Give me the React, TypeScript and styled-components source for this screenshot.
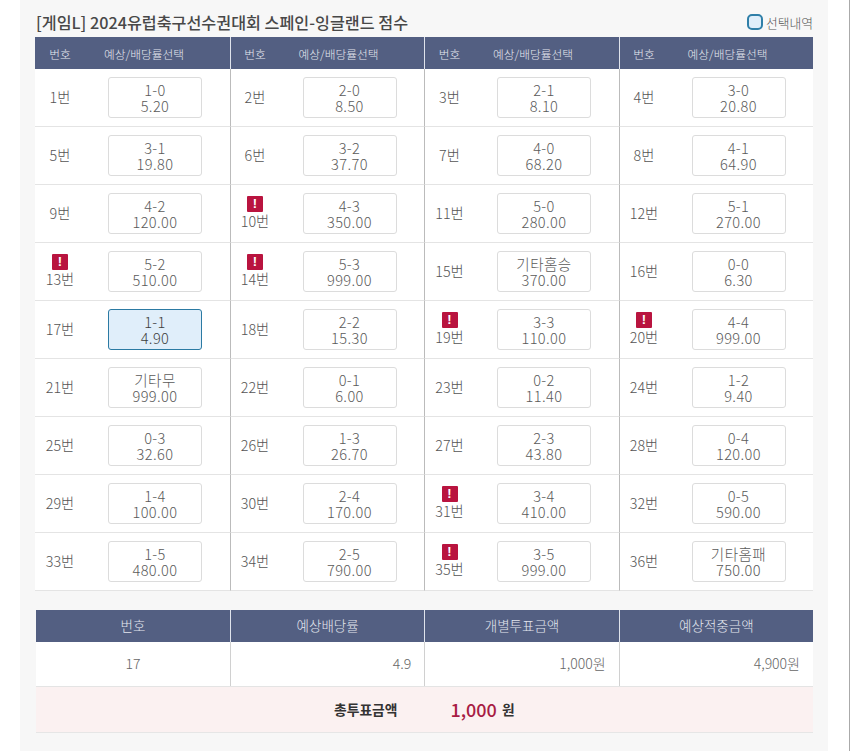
import styled, { createGlobalStyle } from 'styled-components'

const GlobalStyle = createGlobalStyle`
  body {
    margin: 0;
    background: #fff;
    font-family: "Noto Sans CJK KR", "Noto Sans", sans-serif;
    font-weight: 300;
    color: #555;
  }
`

const Page = styled.div`
  width: 850px;
  height: 751px;
  box-sizing: border-box;
  border-right: 1px solid #aaa;
  overflow: hidden;
`

const Panel = styled.main`
  width: 808px;
  height: 751px;
  box-sizing: border-box;
  margin-left: 20px;
  padding: 0 15px;
  background: #f7f7f7;
`

const TitleRow = styled.div`
  display: flex;
  align-items: center;
  justify-content: space-between;
  height: 37px;
  padding-top: 7px;
  box-sizing: border-box;
`

const Title = styled.h2`
  margin: 0 0 0 1px;
  font-size: 16.2px;
  font-weight: 500;
  color: #484848;
  line-height: 30px;
`

const Legend = styled.div`
  display: flex;
  align-items: center;
  gap: 3px;
  font-size: 12.8px;
  font-weight: 300;
  color: #555;
`

const LegendBox = styled.span`
  width: 16px;
  height: 16px;
  box-sizing: border-box;
  border: 2px solid #2f7fa8;
  border-radius: 5px;
  background: #dfeefa;
`

const OddsTable = styled.div`
  display: grid;
  grid-template-columns: repeat(4, 1fr);
  width: 778px;
  background: #fff;
`

const HeadCell = styled.div`
  display: grid;
  grid-template-columns: ${(p) => (p.$first ? '50px 118px' : '49px 118px')};
  align-items: center;
  height: 32px;
  background: #535f82;
  color: #e4e7ef;
  font-size: 11.7px;
  text-align: center;
  box-sizing: border-box;
  border-left: ${(p) => (p.$first ? 'none' : '1px solid #dfe3ec')};
`

const Cell = styled.div`
  display: grid;
  grid-template-columns: ${(p) => (p.$first ? '50px 1fr' : '49px 1fr')};
  align-items: center;
  height: 58px;
  box-sizing: border-box;
  border-bottom: 1px solid #e4e4e4;
  border-left: ${(p) => (p.$first ? 'none' : '1px solid #bbb')};
`

const NumberBox = styled.div`
  display: flex;
  flex-direction: column;
  align-items: center;
  padding-bottom: 2px;
  font-size: 14.3px;
  line-height: 18px;
  color: #555;
`

const Warn = styled.span`
  display: flex;
  align-items: center;
  justify-content: center;
  width: 16px;
  height: 16px;
  border-radius: 1px;
  background: #b9143f;
  color: #fff;
  font-family: "Liberation Sans", sans-serif;
  font-size: 13px;
  font-weight: 700;
  line-height: 16px;
`

const OddsButton = styled.button`
  display: block;
  width: 94px;
  height: 41px;
  margin: 0 0 0 23px;
  padding: 0;
  box-sizing: border-box;
  font-family: inherit;
  font-weight: 300;
  font-size: 14.6px;
  line-height: 16px;
  letter-spacing: 0.4px;
  color: ${(p) => (p.$selected ? '#3d3d3d' : '#5a5a5a')};
  border-radius: 3px;
  background: ${(p) => (p.$selected ? '#e0eefa' : '#fff')};
  border: ${(p) => (p.$selected ? '1px solid #2b7aa3' : '1px solid #dcdcdc')};
`

const SlipGap = styled.div`
  height: 19px;
`

const SlipTable = styled.div`
  display: grid;
  grid-template-columns: 194px repeat(3, 1fr);
  width: 777px;
  margin-left: 1px;
  background: #fff;
`

const SlipHead = styled.div`
  height: 32px;
  line-height: 30px;
  background: #535f82;
  color: #e4e7ef;
  font-size: 13.5px;
  text-align: center;
  box-sizing: border-box;
  border-left: ${(p) => (p.$first ? 'none' : '1px solid #dfe3ec')};
`

const SlipCell = styled.div`
  height: 44px;
  line-height: 43px;
  font-size: 14px;
  color: #666;
  box-sizing: border-box;
  padding: 0 13px;
  text-align: ${(p) => (p.$center ? 'center' : 'right')};
  border-left: ${(p) => (p.$center ? 'none' : '1px solid #d0d0d0')};
`

const TotalRow = styled.div`
  display: flex;
  align-items: center;
  width: 777px;
  height: 47px;
  margin-left: 1px;
  box-sizing: border-box;
  padding: 0 0 2px 298px;
  background: #fbf1f1;
  border-top: 1px solid #e4e4e4;
  border-bottom: 1px solid #e6e6e6;
  font-size: 13.8px;
  font-weight: 700;
  color: #333;
`

const TotalAmount = styled.span`
  margin: 0 5px 0 53px;
  font-size: 18px;
  font-weight: 500;
  color: #a81c44;
`

type Odd = { score: string; rate: string; warn?: boolean; selected?: boolean }

const odds: Odd[] = [
  { score: '1-0', rate: '5.20' },
  { score: '2-0', rate: '8.50' },
  { score: '2-1', rate: '8.10' },
  { score: '3-0', rate: '20.80' },
  { score: '3-1', rate: '19.80' },
  { score: '3-2', rate: '37.70' },
  { score: '4-0', rate: '68.20' },
  { score: '4-1', rate: '64.90' },
  { score: '4-2', rate: '120.00' },
  { score: '4-3', rate: '350.00', warn: true },
  { score: '5-0', rate: '280.00' },
  { score: '5-1', rate: '270.00' },
  { score: '5-2', rate: '510.00', warn: true },
  { score: '5-3', rate: '999.00', warn: true },
  { score: '기타홈승', rate: '370.00' },
  { score: '0-0', rate: '6.30' },
  { score: '1-1', rate: '4.90', selected: true },
  { score: '2-2', rate: '15.30' },
  { score: '3-3', rate: '110.00', warn: true },
  { score: '4-4', rate: '999.00', warn: true },
  { score: '기타무', rate: '999.00' },
  { score: '0-1', rate: '6.00' },
  { score: '0-2', rate: '11.40' },
  { score: '1-2', rate: '9.40' },
  { score: '0-3', rate: '32.60' },
  { score: '1-3', rate: '26.70' },
  { score: '2-3', rate: '43.80' },
  { score: '0-4', rate: '120.00' },
  { score: '1-4', rate: '100.00' },
  { score: '2-4', rate: '170.00' },
  { score: '3-4', rate: '410.00', warn: true },
  { score: '0-5', rate: '590.00' },
  { score: '1-5', rate: '480.00' },
  { score: '2-5', rate: '790.00' },
  { score: '3-5', rate: '999.00', warn: true },
  { score: '기타홈패', rate: '750.00' },
]

export default function App() {
  return (
    <Page>
      <GlobalStyle />
      <Panel>
        <TitleRow>
          <Title>[게임L] 2024유럽축구선수권대회 스페인-잉글랜드 점수</Title>
          <Legend>
            <LegendBox />
            선택내역
          </Legend>
        </TitleRow>
        <OddsTable>
          {[0, 1, 2, 3].map((i) => (
            <HeadCell key={i} $first={i === 0}>
              <span>번호</span>
              <span>예상/배당률선택</span>
            </HeadCell>
          ))}
          {odds.map((odd, i) => (
            <Cell key={i} $first={i % 4 === 0}>
              <NumberBox>
                {odd.warn ? <Warn>!</Warn> : null}
                {i + 1}번
              </NumberBox>
              <OddsButton $selected={odd.selected}>
                {odd.score}
                <br />
                {odd.rate}
              </OddsButton>
            </Cell>
          ))}
        </OddsTable>
        <SlipGap />
        <SlipTable>
          <SlipHead $first>번호</SlipHead>
          <SlipHead>예상배당률</SlipHead>
          <SlipHead>개별투표금액</SlipHead>
          <SlipHead>예상적중금액</SlipHead>
          <SlipCell $center>17</SlipCell>
          <SlipCell>4.9</SlipCell>
          <SlipCell>1,000원</SlipCell>
          <SlipCell>4,900원</SlipCell>
        </SlipTable>
        <TotalRow>
          총투표금액
          <TotalAmount>1,000</TotalAmount>원
        </TotalRow>
      </Panel>
    </Page>
  )
}
